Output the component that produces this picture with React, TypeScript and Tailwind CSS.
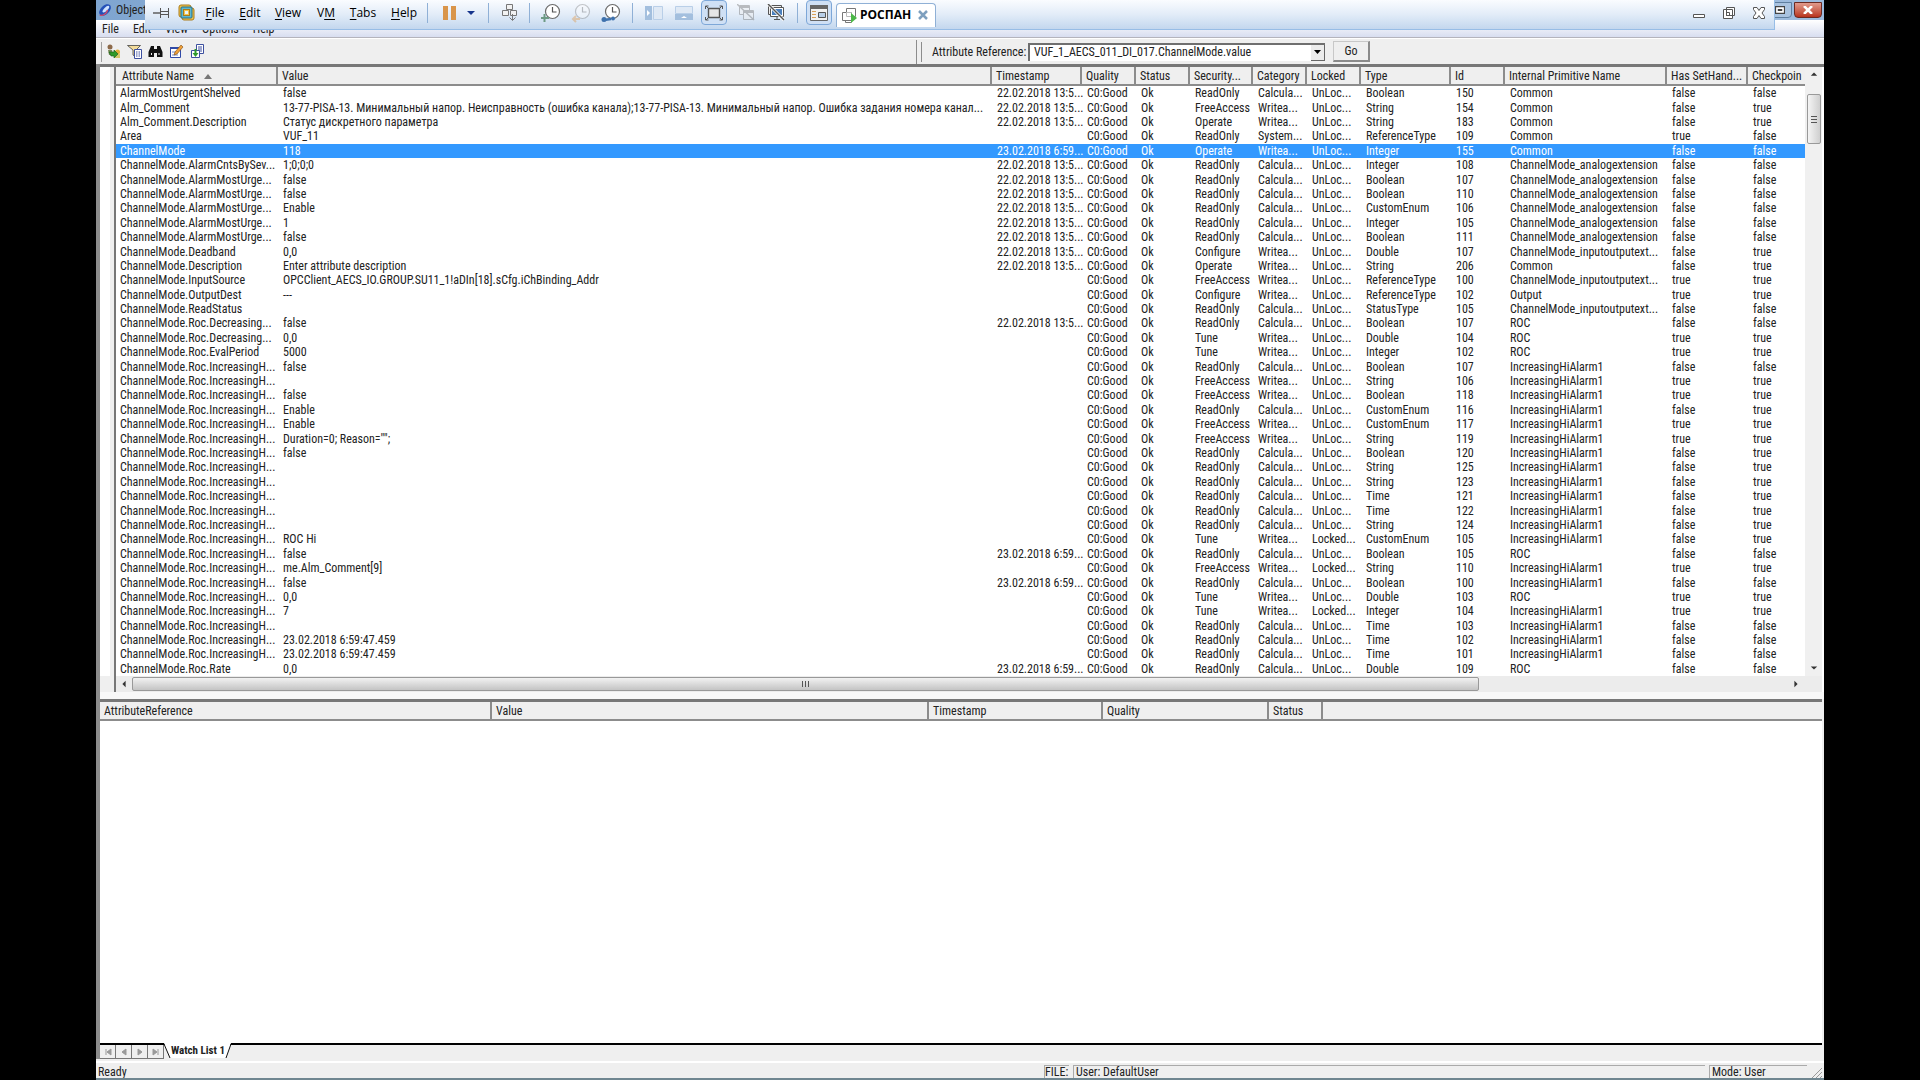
import React from "react";

type Row = [string, string, string, string, string, string, string, string, string, string, string];

const D22 = "22.02.2018 13:5...";
const D23 = "23.02.2018 6:59...";
const CALC = "Calcula...";
const WRIT = "Writea...";
const UNL = "UnLoc...";
const LCK = "Locked...";
const URG = "ChannelMode.AlarmMostUrge...";
const DEC = "ChannelMode.Roc.Decreasing...";
const INC = "ChannelMode.Roc.IncreasingH...";
const ANALOG = "ChannelMode_analogextension";
const INOUT = "ChannelMode_inputoutputext...";
const HI = "IncreasingHiAlarm1";

const columns = [
  { name: "Attribute Name", width: "w-[161px]" },
  { name: "Value", width: "" },
  { name: "Timestamp", width: "w-[90px]" },
  { name: "Quality", width: "w-[54px]" },
  { name: "Status", width: "w-[54px]" },
  { name: "Security...", width: "w-[63px]" },
  { name: "Category", width: "w-[54px]" },
  { name: "Locked", width: "w-[54px]" },
  { name: "Type", width: "w-[90px]" },
  { name: "Id", width: "w-[54px]" },
  { name: "Internal Primitive Name", width: "w-[162px]" },
  { name: "Has SetHand...", width: "w-[81px]" },
  { name: "Checkpoin", width: "w-[58px]" },
];

// name, value, timestamp, security, category, locked, type, id, primitive, has set handler, checkpointed
const rows: Row[] = [
  ["AlarmMostUrgentShelved", "false", D22, "ReadOnly", CALC, UNL, "Boolean", "150", "Common", "false", "false"],
  ["Alm_Comment", "13-77-PISA-13. Минимальный напор. Неисправность (ошибка канала);13-77-PISA-13. Минимальный напор. Ошибка задания номера канал...", D22, "FreeAccess", WRIT, UNL, "String", "154", "Common", "false", "true"],
  ["Alm_Comment.Description", "Статус дискретного параметра", D22, "Operate", WRIT, UNL, "String", "183", "Common", "false", "true"],
  ["Area", "VUF_11", "", "ReadOnly", "System...", UNL, "ReferenceType", "109", "Common", "true", "false"],
  ["ChannelMode", "118", D23, "Operate", WRIT, UNL, "Integer", "155", "Common", "false", "false"],
  ["ChannelMode.AlarmCntsBySev...", "1;0;0;0", D22, "ReadOnly", CALC, UNL, "Integer", "108", ANALOG, "false", "false"],
  [URG, "false", D22, "ReadOnly", CALC, UNL, "Boolean", "107", ANALOG, "false", "false"],
  [URG, "false", D22, "ReadOnly", CALC, UNL, "Boolean", "110", ANALOG, "false", "false"],
  [URG, "Enable", D22, "ReadOnly", CALC, UNL, "CustomEnum", "106", ANALOG, "false", "false"],
  [URG, "1", D22, "ReadOnly", CALC, UNL, "Integer", "105", ANALOG, "false", "false"],
  [URG, "false", D22, "ReadOnly", CALC, UNL, "Boolean", "111", ANALOG, "false", "false"],
  ["ChannelMode.Deadband", "0,0", D22, "Configure", WRIT, UNL, "Double", "107", INOUT, "false", "true"],
  ["ChannelMode.Description", "Enter attribute description", D22, "Operate", WRIT, UNL, "String", "206", "Common", "false", "true"],
  ["ChannelMode.InputSource", "OPCClient_AECS_IO.GROUP.SU11_1!aDIn[18].sCfg.iChBinding_Addr", "", "FreeAccess", WRIT, UNL, "ReferenceType", "100", INOUT, "true", "true"],
  ["ChannelMode.OutputDest", "---", "", "Configure", WRIT, UNL, "ReferenceType", "102", "Output", "true", "true"],
  ["ChannelMode.ReadStatus", "", "", "ReadOnly", CALC, UNL, "StatusType", "105", INOUT, "false", "false"],
  [DEC, "false", D22, "ReadOnly", CALC, UNL, "Boolean", "107", "ROC", "false", "false"],
  [DEC, "0,0", "", "Tune", WRIT, UNL, "Double", "104", "ROC", "true", "true"],
  ["ChannelMode.Roc.EvalPeriod", "5000", "", "Tune", WRIT, UNL, "Integer", "102", "ROC", "true", "true"],
  [INC, "false", "", "ReadOnly", CALC, UNL, "Boolean", "107", HI, "false", "false"],
  [INC, "", "", "FreeAccess", WRIT, UNL, "String", "106", HI, "true", "true"],
  [INC, "false", "", "FreeAccess", WRIT, UNL, "Boolean", "118", HI, "true", "true"],
  [INC, "Enable", "", "ReadOnly", CALC, UNL, "CustomEnum", "116", HI, "false", "true"],
  [INC, "Enable", "", "FreeAccess", WRIT, UNL, "CustomEnum", "117", HI, "true", "true"],
  [INC, "Duration=0; Reason=\"\";", "", "FreeAccess", WRIT, UNL, "String", "119", HI, "true", "true"],
  [INC, "false", "", "ReadOnly", CALC, UNL, "Boolean", "120", HI, "false", "true"],
  [INC, "", "", "ReadOnly", CALC, UNL, "String", "125", HI, "false", "true"],
  [INC, "", "", "ReadOnly", CALC, UNL, "String", "123", HI, "false", "true"],
  [INC, "", "", "ReadOnly", CALC, UNL, "Time", "121", HI, "false", "true"],
  [INC, "", "", "ReadOnly", CALC, UNL, "Time", "122", HI, "false", "true"],
  [INC, "", "", "ReadOnly", CALC, UNL, "String", "124", HI, "false", "true"],
  [INC, "ROC Hi", "", "Tune", WRIT, LCK, "CustomEnum", "105", HI, "false", "true"],
  [INC, "false", D23, "ReadOnly", CALC, UNL, "Boolean", "105", "ROC", "false", "false"],
  [INC, "me.Alm_Comment[9]", "", "FreeAccess", WRIT, LCK, "String", "110", HI, "true", "true"],
  [INC, "false", D23, "ReadOnly", CALC, UNL, "Boolean", "100", HI, "false", "false"],
  [INC, "0,0", "", "Tune", WRIT, UNL, "Double", "103", "ROC", "true", "true"],
  [INC, "7", "", "Tune", WRIT, LCK, "Integer", "104", HI, "true", "true"],
  [INC, "", "", "ReadOnly", CALC, UNL, "Time", "103", HI, "false", "false"],
  [INC, "23.02.2018 6:59:47.459", "", "ReadOnly", CALC, UNL, "Time", "102", HI, "false", "false"],
  [INC, "23.02.2018 6:59:47.459", "", "ReadOnly", CALC, UNL, "Time", "101", HI, "false", "false"],
  ["ChannelMode.Roc.Rate", "0,0", D23, "ReadOnly", CALC, UNL, "Double", "109", "ROC", "false", "false"],
];

const SELECTED = 4;

function Arrow({ dir }: { dir: "up" | "down" | "left" | "right" }) {
  const d = { up: "M1 6 5 2 9 6z", down: "M1 3h8L5 7z", left: "M7 1v8L3 5z", right: "M3 1v8l4-4z" }[dir];
  return (
    <svg viewBox="0 0 10 10" className="h-2 w-2" fill="#333">
      <path d={d} />
    </svg>
  );
}

function Divider() {
  return <span className="h-5 w-px shrink-0 bg-[#8fb0d6]" />;
}

function HostMenu({ label, mark, className }: { label: string; mark: number; className: string }) {
  return (
    <button className={`h-full shrink-0 text-center ${className}`}>
      {label.slice(0, mark)}
      <u className="underline-offset-2">{label[mark]}</u>
      {label.slice(mark + 1)}
    </button>
  );
}

function HostButton({ label, className = "w-[30px]", children }: { label: string; className?: string; children: React.ReactNode }) {
  return (
    <button aria-label={label} className={`flex h-[25px] shrink-0 items-center justify-center ${className}`}>
      {children}
    </button>
  );
}

function Clock({ faded, children }: { faded?: boolean; children: React.ReactNode }) {
  return (
    <svg viewBox="0 0 20 20" className={`h-5 w-5 ${faded ? "opacity-35" : ""}`} fill="none">
      <circle cx="11.5" cy="8.5" r="7" fill="#fff" stroke="#6b6b6b" strokeWidth="1.2" />
      <path d="M11.5 4v5h4" stroke="#555" strokeWidth="1.2" />
      {children}
    </svg>
  );
}

function HostToolbar() {
  return (
    <div className="absolute left-[49px] right-[49px] top-0 flex h-[30px] items-center border-b border-r border-[#97bde6] bg-linear-to-b from-[#fafcff] via-[#e2ecf8] to-[#c3d7ee] pb-1 font-['Open_Sans','Noto_Sans',sans-serif] text-xs text-black">
      <HostButton label="Pin" className="ml-1 w-6">
        <svg viewBox="0 0 17 12" className="h-3 w-[17px]" fill="none" stroke="#555">
          <path d="M0 6h7" strokeWidth="1.4" />
          <path d="M7.5 1v10M15.5 1v10M8 4.5h7M8 7.5h7" fill="#fff" />
        </svg>
      </HostButton>
      <HostButton label="Workstation" className="w-[26px]">
        <svg viewBox="0 0 17 17" className="h-[17px] w-[17px]" fill="none">
          <rect x="1" y="1" width="12" height="12" rx="2" fill="#f4c44a" stroke="#a97c1c" />
          <rect x="4" y="4" width="12" height="12" rx="2" fill="#f4c44a" stroke="#a97c1c" />
          <rect x="3" y="3" width="11" height="11" rx="1" fill="#5db7cf" stroke="#256f86" />
          <rect x="5.5" y="5.5" width="6" height="6" fill="#f4c44a" stroke="#a97c1c" />
          <rect x="7" y="7" width="3" height="3" fill="#e6f4fb" />
        </svg>
      </HostButton>
      <HostMenu label="File" mark={0} className="w-8" />
      <HostMenu label="Edit" mark={0} className="w-[38px]" />
      <HostMenu label="View" mark={0} className="w-[38px]" />
      <HostMenu label="VM" mark={1} className="w-[38px]" />
      <HostMenu label="Tabs" mark={0} className="w-9" />
      <HostMenu label="Help" mark={0} className="w-[46px]" />
      <Divider />
      <HostButton label="Suspend" className="ml-2 w-[26px]">
        <svg viewBox="0 0 13 14" className="h-3.5 w-[13px]" fill="#d9954a"><path d="M0 0h5v14H0zM8 0h5v14H8z" /></svg>
      </HostButton>
      <HostButton label="Power options" className="mr-2 w-[18px]">
        <svg viewBox="0 0 8 4" className="h-1 w-2" fill="#16358c"><path d="M0 0h8L4 4z" /></svg>
      </HostButton>
      <Divider />
      <HostButton label="Send Ctrl+Alt+Del" className="w-10">
        <svg viewBox="0 0 17 19" className="h-[19px] w-[17px]" fill="#f2f2f2" stroke="#777">
          <path d="M5.5 1.5h6v5h-6zM1.5 7.5h6v5h-6zM9.5 7.5h6v5h-6z" />
          <path d="M11.5 11v6m-3-2.5 3 3 3-3" fill="none" />
        </svg>
      </HostButton>
      <Divider />
      <HostButton label="Take snapshot" className="ml-1.5 w-[30px]">
        <Clock><path d="M3.5 11v8M0 15h8" stroke="#6d9a85" strokeWidth="2" /></Clock>
      </HostButton>
      <HostButton label="Revert snapshot">
        <Clock faded><path d="M9 16H2m3-3-3 3 3 3" stroke="#e08a2a" strokeWidth="2" /></Clock>
      </HostButton>
      <HostButton label="Manage snapshots">
        <Clock>
          <path d="m3 17 7-1" stroke="#3f72ad" strokeWidth="2.5" />
          <circle cx="3" cy="16.5" r="2.5" fill="#3f72ad" />
          <circle cx="12" cy="15.5" r="2" fill="#3f72ad" />
        </Clock>
      </HostButton>
      <span className="w-1.5 shrink-0" />
      <Divider />
      <HostButton label="Show library" className="ml-1.5 w-[30px]">
        <svg viewBox="0 0 18 14" className="h-3.5 w-[18px]">
          <path d="M0 0h7v14H0z" fill="#a3bfde" /><path d="M2 4l3 3-3 3z" fill="#fff" />
          <path d="M8.5.5h9v13h-9z" fill="#dfe9f5" stroke="#b9cfe8" />
        </svg>
      </HostButton>
      <HostButton label="Show thumbnails">
        <svg viewBox="0 0 18 14" className="h-3.5 w-[18px]">
          <path d="M.5.5h17v7H.5z" fill="#dfe9f5" stroke="#b9cfe8" />
          <path d="M0 8h18v6H0z" fill="#a3bfde" /><path d="M6 12l3-2 3 2z" fill="#fff" />
        </svg>
      </HostButton>
      <HostButton label="Full screen" className="ml-0.5 w-[26px] rounded-sm border border-[#7da7d8] bg-[#cfe0f5]">
        <svg viewBox="0 0 18 16" className="h-4 w-[18px]" fill="none" stroke="#555">
          <path d="M3.5 3.5h11v9h-11z" fill="#e6e6e6" strokeWidth="1.4" />
          <path d="M.5 4V1h3M17.5 4V1h-3M.5 12v3h3M17.5 12v3h-3M1 1l3 3M17 1l-3 3M1 15l3-3M17 15l-3-3" />
        </svg>
      </HostButton>
      <HostButton label="Unity" className="ml-1 w-[30px]">
        <svg viewBox="0 0 18 17" className="h-[17px] w-[18px] opacity-45" fill="none" stroke="#777">
          <path d="M2.5 1.5h10v9h-10z" fill="#eee" /><path d="M2.5 3h10" strokeWidth="2" />
          <path d="M6.5 6.5h10v9h-10z" fill="#eee" /><path d="M6.5 8h10" strokeWidth="2" />
          <path d="M0 0l17 16" strokeWidth="1.4" />
        </svg>
      </HostButton>
      <HostButton label="Stretch guest">
        <svg viewBox="0 0 18 17" className="h-[17px] w-[18px]" fill="none" stroke="#555">
          <path d="M1.5 1.5h13v9h-13z" fill="#eee" /><path d="M3.5 3.5h13v9h-13z" fill="#fff" />
          <path d="M5 5h10v6H5z" fill="#4b80bd" stroke="none" />
          <path d="M10 13v2M7 15.5h6" /><path d="M1 0l16 16" stroke="#fff" strokeWidth="3" /><path d="M1 0l16 16" strokeWidth="1.5" />
        </svg>
      </HostButton>
      <span className="w-1.5 shrink-0" />
      <Divider />
      <HostButton label="Console view" className="ml-2 w-[26px] rounded-sm border border-[#7da7d8] bg-[#cfe0f5]">
        <svg viewBox="0 0 18 16" className="h-4 w-[18px]">
          <path d="M.5.5h17v15H.5z" fill="#f2f2f2" stroke="#666" /><path d="M0 0h18v4H0z" fill="#666" />
          <path d="M2 6.5h4M2 9.5h4M2 12.5h4" stroke="#d9a15a" /><path d="M8.5 7.5h7v5h-7z" fill="#b9cfe8" stroke="#555" />
        </svg>
      </HostButton>
      <div className="ml-1 mt-1 flex h-6 shrink-0 items-center rounded-t border border-b-0 border-[#8fb0d6] bg-white pl-1 pr-1.5">
        <svg viewBox="0 0 17 17" className="h-[17px] w-[17px]" fill="#fff" stroke="#777">
          <path d="M5.5 1.5h9v8h-9z" /><path d="M1.500 5.5h9v8h-9z" /><path d="M5.5 5.5h5v4h-5z" stroke="#bbb" />
          <path d="M4.5 13.5v2h6" fill="none" />
          <path d="M10 6l6 5-6 5z" fill="#4cb848" stroke="none" />
        </svg>
        <span className="ml-0.5 font-bold">РОСПАН</span>
        <button aria-label="Close tab" className="ml-1.5 flex w-3 justify-center">
          <svg viewBox="0 0 10 10" className="h-2.5 w-2.5" stroke="#7d9fbe" strokeWidth="2.5"><path d="m1 1 8 8M9 1 1 9" /></svg>
        </button>
      </div>
      <div className="ml-auto flex">
        <HostButton label="Minimize">
          <svg viewBox="0 0 12 12" className="h-3 w-3" fill="#fff" stroke="#555"><path d="M.5 7.5h11v3H.5z" /></svg>
        </HostButton>
        <HostButton label="Restore">
          <svg viewBox="0 0 12 12" className="h-3 w-3" fill="#fff" stroke="#555"><path d="M3.5.5h8v8h-8zM.5 2.5h9v9h-9zM3.5 5.5h3v3h-3z" /></svg>
        </HostButton>
        <HostButton label="Close">
          <svg viewBox="0 0 12 12" className="h-3 w-3" fill="#fff" stroke="#555"><path d="M.5.5H4l2 3 2-3h3.5v2L9 6l2.5 3.5v2H8l-2-3-2 3H.5v-2L3 6 .5 2.5z" /></svg>
        </HostButton>
      </div>
    </div>
  );
}

function TitleBar() {
  return (
    <>
      <div className="flex h-5 items-center bg-linear-to-r from-[#7fa5d0] via-[#a9c3e0] to-[#9dbbdd] pl-0.5">
        <svg viewBox="0 0 16 16" className="h-3.5 w-3.5">
          <ellipse cx="8" cy="8" rx="8" ry="5" transform="rotate(-45 8 8)" fill="#2450b8" />
          <ellipse cx="9" cy="7" rx="5" ry="2" transform="rotate(-45 9 7)" fill="#cfe2ff" />
          <path d="M2 14c4 1 8-2 9-6" stroke="#d14a6a" strokeWidth="1.5" fill="none" />
        </svg>
        <span className="ml-1">Object Viewer</span>
        <div className="ml-auto flex items-start gap-0.5 pr-0.5">
          <button aria-label="Restore window" className="flex h-4 w-7 items-center justify-end rounded-b-sm border border-[#5f7f9f] bg-[#a9c3e0] pr-1.5">
            <svg viewBox="0 0 9 7" className="h-2 w-2.5" fill="none" stroke="#444"><path d="M.5.5h8v6h-8zM3 3h3v1H3z" fill="#fff" /></svg>
          </button>
          <button aria-label="Close window" className="flex h-4 w-7 items-center justify-center rounded-b-sm border border-[#6b2a22] bg-linear-to-b from-[#e09a8c] to-[#b8321c]">
            <svg viewBox="0 0 10 8" className="h-2 w-2.5" stroke="#fff" strokeWidth="2.5"><path d="m1 0 8 8M9 0 1 8" /></svg>
          </button>
        </div>
      </div>
      <nav className="flex h-[18px] items-center gap-3.5 border-b border-[#b4b4bc] bg-linear-to-b from-white to-[#d8def0] pl-1.5">
        {["File", "Edit", "View", "Options", "Help"].map((m) => (
          <button key={m}>{m}</button>
        ))}
      </nav>
    </>
  );
}

function AppToolbar() {
  return (
    <div className="flex h-[26px] items-center border-t border-white">
      <span className="ml-1 h-5 w-0.5 border-r border-[#a0a0a0]" />
      <div className="flex gap-1.5 pl-1">
        <button aria-label="Connect">
          <svg viewBox="0 0 15 15" className="h-[15px] w-[15px]">
            <circle cx="4" cy="3" r="2.5" fill="#8d6a4a" /><path d="M2 6h4l1 5H3z" fill="#7a8a5a" />
            <circle cx="11.5" cy="8" r="2.5" fill="#e0b03a" /><path d="M9 10h5v4H9z" fill="#d5c86a" />
            <path d="M3 8h5V6l4 4-4 4v-2H5z" fill="#2f9a2a" stroke="#145a12" strokeWidth=".6" />
          </svg>
        </button>
        <button aria-label="Filter">
          <svg viewBox="0 0 15 15" className="h-[15px] w-[15px]">
            <path d="M.5 1.5h13L9 6v7l-3-2V6z" fill="#f3dc9a" stroke="#444" strokeWidth=".8" />
            <path d="M7.5 5.5h7v9h-7z" fill="#fff" stroke="#3c4f9f" /><path d="M9 8h4M9 10h4M9 12h4" stroke="#3c4f9f" strokeDasharray="1 .5" />
          </svg>
        </button>
        <button aria-label="Find">
          <svg viewBox="0 0 15 15" className="h-[15px] w-[15px]" fill="#111">
            <path d="M3 2h3v3h3V2h3l2.5 6v5H9V9H6v4H.5V8z" /><path d="M3 9h1v2H3zM10.5 9h1v2h-1z" fill="#eee" />
          </svg>
        </button>
        <button aria-label="Modify value">
          <svg viewBox="0 0 15 15" className="h-[15px] w-[15px]">
            <path d="M1.5 3.5h10v10h-10z" fill="#fff" stroke="#2f4aa8" /><path d="M1 3h11v2H1z" fill="#2f4aa8" />
            <path d="M3 8h6M3 11h6" stroke="#7088c8" /><path d="m5 11 1-3 6-7 2 2-6 7z" fill="#f0a03a" stroke="#7a4a10" strokeWidth=".6" />
          </svg>
        </button>
        <button aria-label="Add to watch">
          <svg viewBox="0 0 15 15" className="h-[15px] w-[15px]">
            <path d="M6.5.5h7v9h-7z" fill="#fff" stroke="#3c4f9f" /><path d="M8 3h4M8 5h4M8 7h4" stroke="#3c4f9f" />
            <path d="M1.5 6.5h8v7h-8z" fill="#fff" stroke="#3c4f9f" /><path d="M4.5 5h2v4h2l-3 4-3-4h2z" fill="#2f9a2a" />
          </svg>
        </button>
      </div>
      <div className="ml-auto flex h-full items-center">
        <span className="h-6 border-l border-[#8c8c8c]" />
        <span className="ml-1 h-5 border-l border-[#8c8c8c]" />
        <label htmlFor="attribute-reference" className="ml-2.5 w-24 whitespace-nowrap">Attribute Reference:</label>
        <div className="relative flex">
          <select id="attribute-reference" className="h-[18px] w-[297px] appearance-none border-l-2 border-t-2 border-[#6f6f6f] bg-white pb-0.5 pl-1 leading-3">
            <option>VUF_1_AECS_011_DI_017.ChannelMode.value</option>
          </select>
          <span className="pointer-events-none absolute bottom-0 right-0 top-0.5 flex w-3.5 items-center justify-center border-b border-r border-[#666] bg-[#ececec]">
            <svg viewBox="0 0 7 4" className="h-1 w-[7px]"><path d="M0 0h7L3.5 4z" /></svg>
          </span>
        </div>
        <button className="ml-2 h-[21px] w-[37px] border-b-2 border-l border-r-2 border-t border-[#8a8a8a] border-l-[#c8c8c8] border-t-[#c8c8c8]">Go</button>
        <span className="w-[454px]" />
      </div>
    </div>
  );
}

function AttributeTable() {
  return (
    <table className="h-full w-full table-fixed border-collapse bg-white">
      <colgroup>
        {columns.map((c) => <col key={c.name} className={c.width} />)}
      </colgroup>
      <thead>
        <tr className="h-[18px]">
          {columns.map((c, i) => (
            <th key={c.name} className={`whitespace-nowrap border-b-2 border-[#8c8c8c] bg-[#efefef] p-0 text-left font-normal leading-4 ${i ? "border-l-2 pl-1" : "pl-1.5"}`}>
              {c.name}
              {i === 0 && (
                <svg viewBox="0 0 8 5" className="ml-2.5 inline h-[5px] w-2 align-middle" fill="#777"><path d="M4 0l4 5H0z" /></svg>
              )}
            </th>
          ))}
        </tr>
      </thead>
      <tbody>
        {rows.map((row, i) => (
          <tr key={i} className={i === SELECTED ? "bg-[#3399ff] text-white" : ""}>
            {[...row.slice(0, 3), "C0:Good", "Ok", ...row.slice(3)].map((cell, j) => (
              <td key={j} className={`whitespace-nowrap p-0 leading-[14px] ${j ? "pl-1.5" : "pl-1"}`}>{cell}</td>
            ))}
          </tr>
        ))}
      </tbody>
    </table>
  );
}

function WatchHeader() {
  return (
    <table className="w-full table-fixed border-collapse">
      <thead>
        <tr className="h-[18px]">
          {[
            ["AttributeReference", "w-[391px]"],
            ["Value", "w-[437px]"],
            ["Timestamp", "w-[174px]"],
            ["Quality", "w-[166px]"],
            ["Status", "w-[54px]"],
            ["", ""],
          ].map(([name, width], i) => (
            <th key={i} className={`border-b-2 border-[#8c8c8c] bg-[#efefef] p-0 pl-1 text-left font-normal leading-4 ${width} ${i ? "border-l-2" : ""}`}>{name}</th>
          ))}
        </tr>
      </thead>
    </table>
  );
}

export default function App() {
  return (
    <div className="h-screen overflow-hidden bg-black px-[5%] font-['Roboto_Condensed',Roboto,'Noto_Sans',sans-serif] text-xs leading-3 text-[#222]">
      <div className="relative flex h-full flex-col bg-[#efefef]">
        <TitleBar />
        <HostToolbar />
        <AppToolbar />

        <main className="flex min-h-0 flex-1 flex-col border-l-4 border-[#8c8c8c]">
          <section className="flex min-h-0 flex-[629] border-t-[3px] border-[#777]">
            <div className="mb-4 w-2.5 bg-white" />
            <div className="ml-1 flex min-w-0 flex-1 flex-col border-l-2 border-[#777]">
              <div className="flex min-h-0 flex-1">
                <div className="min-w-0 flex-1 overflow-hidden"><AttributeTable /></div>
                <div className="flex w-[17px] flex-col items-center bg-[#f0f0f0]">
                  <span className="flex h-[27px] items-start pt-1"><Arrow dir="up" /></span>
                  <div className="flex h-[50px] w-3.5 flex-col items-center justify-center gap-0.5 rounded-xs border border-[#999] bg-linear-to-r from-[#f4f4f4] to-[#cfcfcf]">
                    <span className="h-px w-1.5 bg-[#555]" />
                    <span className="h-px w-1.5 bg-[#555]" />
                    <span className="h-px w-1.5 bg-[#555]" />
                  </div>
                  <span className="mt-auto pb-1"><Arrow dir="down" /></span>
                </div>
              </div>
              <div className="flex h-4 items-center bg-[#ececec] pr-[22px]">
                <span className="flex w-4 justify-center"><Arrow dir="left" /></span>
                <div className="flex h-3.5 w-4/5 items-center justify-center gap-0.5 rounded-xs border border-[#999] bg-linear-to-b from-[#f2f2f2] to-[#c4c4c4]">
                  <span className="h-1.5 w-px bg-[#555]" />
                  <span className="h-1.5 w-px bg-[#555]" />
                  <span className="h-1.5 w-px bg-[#555]" />
                </div>
                <span className="ml-auto"><Arrow dir="right" /></span>
              </div>
            </div>
            <span className="w-0.5 bg-white" />
          </section>
          <div className="h-[7px] bg-[#f8f8f8]" />
          <section className="mr-0.5 flex min-h-0 flex-[359] flex-col border-t-[3px] border-[#777]">
            <WatchHeader />
            <div className="flex-1 bg-white" />
            <div className="flex h-4 border-t-2 border-black">
              {["M3 2v6M8 2v6L4 5z", "M7 2v6L3 5z", "M3 2v6l4-3z", "M7 2v6M2 2v6l4-3z"].map((d) => (
                <button key={d} aria-label="Scroll tabs" className="flex w-4 items-center justify-center border-b border-r border-[#777]">
                  <svg viewBox="0 0 10 10" className="h-2.5 w-2.5" fill="#999" stroke="#999"><path d={d} /></svg>
                </button>
              ))}
              <button className="relative -mt-0.5 flex h-4 w-[68px] items-center justify-center">
                <svg viewBox="0 0 68 16" className="absolute inset-0 h-4 w-[68px]">
                  <path d="M0 0 6 15H62L67 0z" fill="#fff" /><path d="M0 1 6 15M62 15 67 1" stroke="#111" fill="none" />
                </svg>
                <span className="relative text-[11px] font-bold">Watch List 1</span>
              </button>
            </div>
          </section>
        </main>

        <footer className="mt-0.5 flex h-[17px] shrink-0 items-stretch gap-1 border-t-2 border-white pr-[17px] pt-0.5">
          <span className="flex-1 border-t border-transparent pl-0.5">Ready</span>
          <span className="w-[25px] border-l border-t border-[#aaa]">FILE:</span>
          <span className="w-[632px] border-l border-t border-[#aaa] pl-0.5">User: DefaultUser</span>
          <span className="w-[98px] border-l border-t border-[#aaa] pl-0.5">Mode: User</span>
          <svg viewBox="0 0 12 12" className="absolute bottom-0.5 right-0.5 h-3 w-3" stroke="#999"><path d="M2 12 12 2M6 12l6-6M10 12l2-2" /></svg>
        </footer>
        <div className="h-0.5 shrink-0 bg-[#6f8690]" />
      </div>
    </div>
  );
}
